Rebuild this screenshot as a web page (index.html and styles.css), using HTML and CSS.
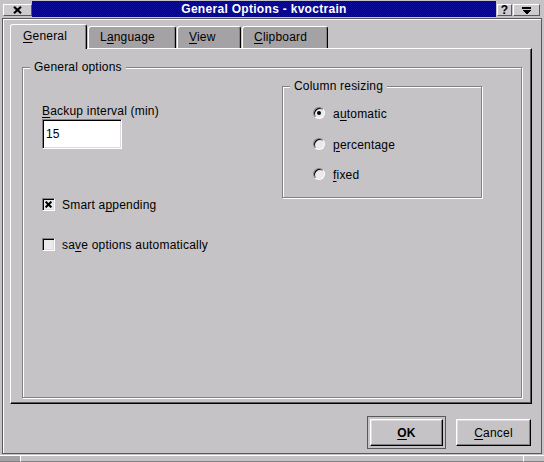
FILE: index.html
```html
<!DOCTYPE html>
<html>
<head>
<meta charset="utf-8">
<title>General Options - kvoctrain</title>
<link rel="stylesheet" href="styles.css">
</head>
<body>
<div class="window">
  <div class="titlebar">
    <div class="tb-btn tb-close">
      <svg width="9" height="8" viewBox="0 0 9 8"><path d="M1 0.8L8 7.2M8 0.8L1 7.2" stroke="#000" stroke-width="2.2" fill="none"/></svg>
    </div>
    <div class="tb-title">General Options - kvoctrain</div>
    <div class="tb-btn tb-help">?</div>
    <div class="tb-btn tb-menu">
      <svg width="9" height="7" viewBox="0 0 9 7" shape-rendering="crispEdges"><rect x="0" y="0" width="9" height="2" fill="#000"/><path d="M0 3H9L4.5 7.5Z" fill="#000"/></svg>
    </div>
  </div>

  <div class="client">
    <div class="tabs">
      <div class="tab tab-active tab-general"><u>G</u>eneral</div>
      <div class="tab tab-language">L<u>a</u>nguage</div>
      <div class="tab tab-view"><u>V</u>iew</div>
      <div class="tab tab-clipboard"><u>C</u>lipboard</div>
    </div>

    <div class="panel">
      <div class="group group-main">
        <span class="group-title">General options</span>
        <div class="group-body">
          <div class="col-left">
            <div class="field-label"><u>B</u>ackup interval (min)</div>
            <input class="field" type="text" value="15">
            <div class="check check-first">
              <span class="box">
                <svg width="7" height="7" viewBox="0 0 7 7"><path d="M0.6 0.6L6.4 6.4M6.4 0.6L0.6 6.4" stroke="#000" stroke-width="2" fill="none"/></svg>
              </span>
              <span>Smart a<u>p</u>pending</span>
            </div>
            <div class="check check-second">
              <span class="box"></span>
              <span>sa<u>v</u>e options automatically</span>
            </div>
          </div>

          <div class="group group-col">
            <span class="group-title">Column resizing</span>
            <div class="radios">
              <div class="radio-row"><span class="radio radio-on"></span><span>a<u>u</u>tomatic</span></div>
              <div class="radio-row"><span class="radio"></span><span><u>p</u>ercentage</span></div>
              <div class="radio-row"><span class="radio"></span><span><u>f</u>ixed</span></div>
            </div>
          </div>
        </div>
      </div>
    </div>

    <div class="buttons">
      <div class="default-frame"><button class="btn btn-ok" type="button"><u>O</u>K</button></div>
      <button class="btn btn-cancel" type="button"><u>C</u>ancel</button>
    </div>
  </div>

  <div class="strip">
    <span class="strip-corner strip-left"></span>
    <span class="strip-mid"></span>
    <span class="strip-corner strip-right"></span>
  </div>
</div>
</body>
</html>
```

FILE: styles.css
```css
* {
  box-sizing: border-box;
}

html, body {
  margin: 0;
  padding: 0;
}

body {
  width: 544px;
  height: 462px;
  overflow: hidden;
  background: #c6c3c6;
  color: #000;
  font-family: "Liberation Sans", Arial, sans-serif;
  font-size: 12px;
  line-height: 14px;
  letter-spacing: 0.2px;
}

u {
  text-decoration: underline;
  text-decoration-thickness: 1px;
  text-underline-offset: 2px;
}

.window {
  display: flex;
  flex-direction: column;
  height: 462px;
}

/* ---------- title bar ---------- */
.titlebar {
  display: flex;
  align-items: flex-start;
  height: 18px;
  padding: 1px 0 0 3px;
  flex: none;
}

.tb-btn {
  display: flex;
  align-items: center;
  justify-content: center;
  height: 12px;
  margin-top: 3px;
  background: #cecbce;
  border: 1px solid;
  border-color: #fff #5a595a #5a595a #fff;
}

.tb-close {
  width: 29px;
}

.tb-title {
  width: 464px;
  height: 16px;
  background-color: #000084;
  background-image: conic-gradient(#10109a 25%, #000080 0 50%, #10109a 0 75%, #000080 0);
  background-size: 2px 2px;
  color: #fff;
  font-weight: bold;
  letter-spacing: 0.3px;
  text-align: center;
  line-height: 16px;
}

.tb-help {
  width: 15px;
  margin-left: 1px;
  font-weight: bold;
  font-size: 12px;
  line-height: 12px;
  letter-spacing: 0;
}

.tb-menu {
  width: 27px;
  margin-left: 1px;
}

/* ---------- client area ---------- */
.client {
  display: flex;
  flex-direction: column;
  height: 436px;
  margin: 0 2px;
  border: 1px solid #5a595a;
  box-shadow: inset 1px 1px 0 #fff;
  padding: 5px 9px 0 7px;
}

/* ---------- tabs ---------- */
.tabs {
  display: flex;
  align-items: flex-end;
  gap: 1px;
  height: 24px;
  flex: none;
}

.tab {
  height: 22px;
  padding: 3px 0 0 11px;
  background: #a5a2a5;
  border: 1px solid;
  border-color: #fff #000 transparent #fff;
  border-bottom: none;
  border-radius: 3px 3px 0 0;
  box-shadow: inset -1px 0 0 #838183;
  white-space: nowrap;
}

.tab-active {
  position: relative;
  height: 25px;
  margin-bottom: -1px;
  padding: 4px 0 0 12px;
  background: #c6c3c6;
}

.tab-general { width: 77px; }
.tab-language { width: 88px; }
.tab-view { width: 64px; }
.tab-clipboard { width: 86px; }

/* ---------- panel ---------- */
.panel {
  height: 356px;
  flex: none;
  border: 1px solid;
  border-color: #fff #000 #000 #fff;
  box-shadow: inset -1px -1px 0 #5a595a;
  padding: 18px 0 0 11px;
}

.group {
  position: relative;
  border: 1px solid #838183;
  box-shadow: inset 1px 1px 0 #fff, 1px 1px 0 #fff;
}

.group-title {
  position: absolute;
  left: 7px;
  top: -8px;
  padding: 0 4px;
  background: #c6c3c6;
  white-space: nowrap;
}

.group-main {
  width: 500px;
  height: 331px;
}

.group-body {
  display: flex;
  align-items: flex-start;
  padding-left: 19px;
}

.col-left {
  width: 240px;
  margin-top: 36px;
  display: flex;
  flex-direction: column;
  align-items: flex-start;
}

.field-label {
  height: 14px;
}

.field {
  width: 80px;
  height: 30px;
  margin: 1px 0 0 0;
  padding: 0 0 0 3px;
  font: inherit;
  letter-spacing: inherit;
  color: #000;
  background: #fff;
  border: 1px solid;
  border-color: #838183 #fff #fff #838183;
  box-shadow: inset 1px 1px 0 #000, inset -1px -1px 0 #dedbde;
  outline: none;
}

.check {
  display: flex;
  align-items: flex-start;
  height: 14px;
  white-space: nowrap;
}

.check-first { margin-top: 49px; }
.check-second { margin-top: 26px; }

.box {
  display: flex;
  align-items: center;
  justify-content: center;
  width: 13px;
  height: 13px;
  margin-right: 7px;
  background: #ebe9eb;
  border: 1px solid;
  border-color: #838183 #fff #fff #838183;
  box-shadow: inset 1px 1px 0 #000, inset -1px -1px 0 #dedbde;
}

.group-col {
  width: 200px;
  height: 112px;
  margin-top: 18px;
}

.radios {
  display: flex;
  flex-direction: column;
  gap: 16.5px;
  padding: 20px 0 0 30px;
}

.radio-row {
  display: flex;
  align-items: flex-start;
  height: 14px;
  white-space: nowrap;
}

.radio {
  display: flex;
  align-items: center;
  justify-content: center;
  width: 12px;
  height: 12px;
  margin-right: 8px;
  border-radius: 50%;
  background: #ebe9eb;
  border: 1px solid;
  border-color: #838183 #fff #fff #838183;
  box-shadow: inset 1px 1px 0 #000;
}

.radio-on::after {
  content: "";
  width: 4px;
  height: 4px;
  border-radius: 50%;
  background: #000;
}

/* ---------- buttons ---------- */
.buttons {
  display: flex;
  justify-content: flex-end;
  align-items: center;
  gap: 10px;
  margin-top: 12px;
  padding-right: 1px;
  flex: none;
}

.default-frame {
  padding: 2px;
  border: 1px solid #5a595a;
}

.btn {
  display: flex;
  align-items: center;
  justify-content: center;
  height: 27px;
  padding: 0;
  margin: 0;
  font: inherit;
  letter-spacing: inherit;
  color: #000;
  background: #c6c3c6;
  border: 1px solid;
  border-color: #fff #000 #000 #fff;
  box-shadow: inset -1px -1px 0 #838183, inset 1px 1px 0 #dedbde;
}

.btn-ok {
  width: 73px;
  font-weight: bold;
}

.btn-cancel {
  width: 75px;
}

/* ---------- bottom resize strip ---------- */
.strip {
  display: flex;
  height: 8px;
  padding-top: 1px;
  flex: none;
}

.strip-corner,
.strip-mid {
  border-top: 1px solid #fff;
  border-bottom: 1px solid #838183;
}

.strip-left {
  width: 20px;
  background: #a5a2a5;
}

.strip-mid {
  flex: 1;
  border-left: 1px solid #fff;
}

.strip-right {
  width: 21px;
  border-left: 1px solid #fff;
}
```
